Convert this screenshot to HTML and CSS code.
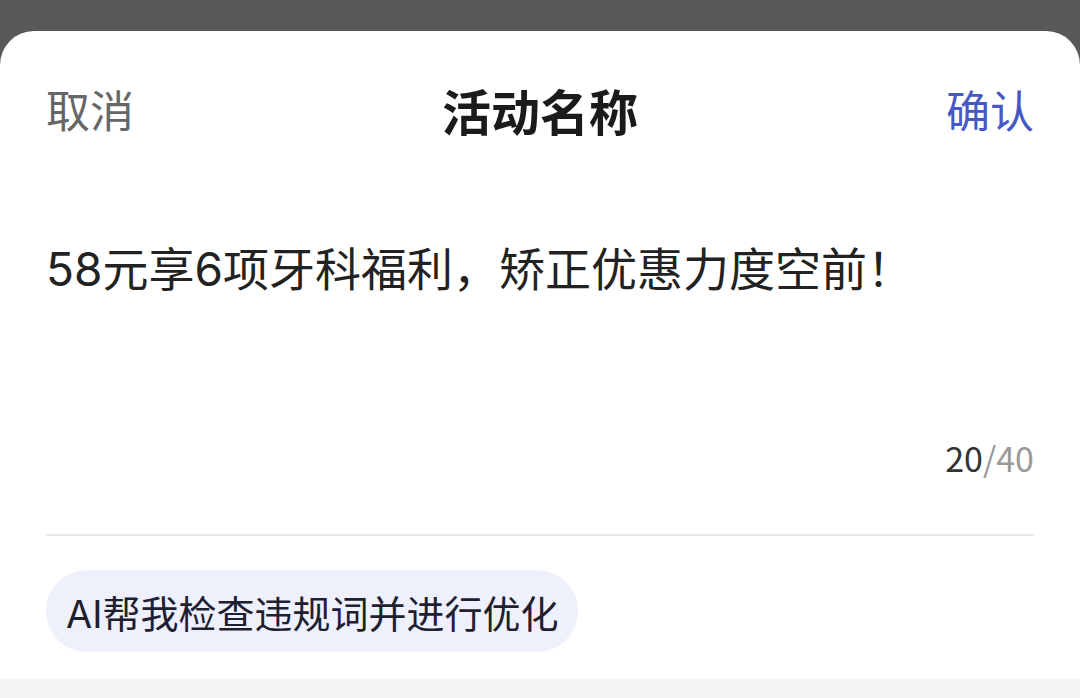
FILE: index.html
```html
<!DOCTYPE html>
<html lang="zh-CN">
<head>
<meta charset="utf-8">
<title>活动名称</title>
<link rel="stylesheet" href="styles.css">
</head>
<body>
<div class="page">
  <div class="sheet">
    <div class="content">
      <header class="header">
        <span class="cancel">取消</span>
        <span class="title">活动名称</span>
        <span class="confirm">确认</span>
      </header>
      <div class="editor">
        <p class="text">58元享6项牙科福利，矫正优惠力度空前！</p>
        <div class="counter"><span class="count">20</span><span class="max">/40</span></div>
      </div>
      <div class="divider"></div>
      <div class="chips">
        <span class="chip">AI帮我检查违规词并进行优化</span>
      </div>
    </div>
    <div class="footer"></div>
  </div>
</div>
</body>
</html>
```

FILE: styles.css
```css
html, body {
  margin: 0;
  padding: 0;
}
body {
  background: #585858;
  font-family: "Noto Sans CJK SC", "Noto Sans", sans-serif;
  width: 1080px;
  height: 698px;
  overflow: hidden;
}
.page {
  padding-top: 31px;
  height: 698px;
  box-sizing: border-box;
}
.sheet {
  background: #ffffff;
  border-radius: 34px 34px 0 0;
  height: 667px;
  display: flex;
  flex-direction: column;
  overflow: hidden;
}
.content {
  flex: 1;
  padding: 0 46px;
}
.header {
  height: 156px;
  display: flex;
  align-items: center;
  justify-content: space-between;
}
.cancel,
.confirm {
  font-size: 44px;
  line-height: 1;
}
.cancel {
  color: #666666;
}
.confirm {
  color: #4658c1;
}
.title {
  font-size: 49px;
  line-height: 1;
  font-weight: 700;
  color: #1b1b1b;
}
.editor {
  display: flex;
  flex-direction: column;
}
.text {
  margin: 51px 0 0 0;
  font-family: Inter, "Noto Sans CJK SC", sans-serif;
  font-size: 46px;
  line-height: 63px;
  color: #222222;
}
.counter {
  margin-top: 140px;
  align-self: flex-end;
  font-size: 34px;
  line-height: 1;
}
.count {
  color: #333333;
}
.max {
  color: #9a9a9a;
}
.divider {
  margin-top: 59px;
  height: 2px;
  background: #e9e9e9;
}
.chips {
  margin-top: 34px;
  display: flex;
}
.chip {
  height: 82px;
  padding: 0 20px 0 20px;
  border-radius: 41px;
  background: #eef1fc;
  display: flex;
  align-items: center;
  font-family: Inter, "Noto Sans CJK SC", sans-serif;
  font-size: 38px;
  color: #1e2030;
}
.footer {
  height: 19px;
  background: #f5f5f5;
}
```
